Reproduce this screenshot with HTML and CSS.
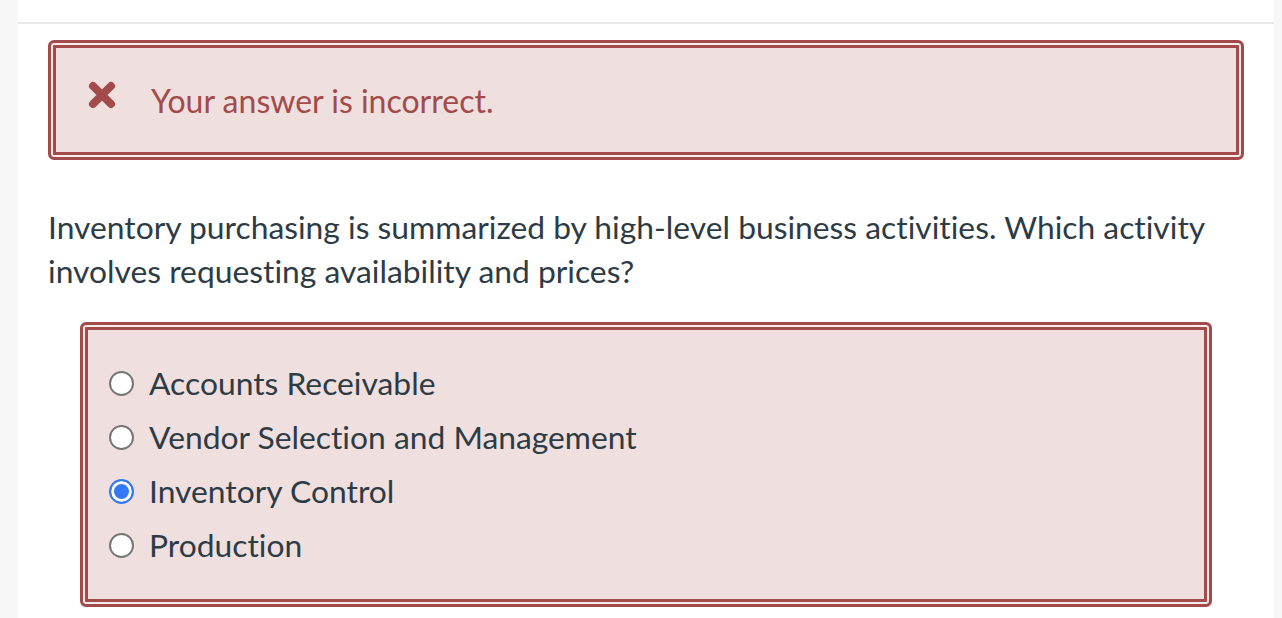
FILE: index.html
```html
<!DOCTYPE html>
<html lang="en">
<head>
<meta charset="utf-8">
<title>Quiz question</title>
<link rel="stylesheet" href="styles.css">
</head>
<body>
<div class="page">
  <main class="content">
    <div class="top-bar"></div>
    <div class="body">
      <div class="feedback">
        <svg class="feedback-icon" viewBox="0 0 28 28" width="28" height="28" aria-hidden="true">
          <path d="M5 5 L23 23 M23 5 L5 23" stroke="#a24b4a" stroke-width="8" stroke-linecap="round" fill="none"/>
        </svg>
        <span class="feedback-text">Your answer is incorrect.</span>
      </div>
      <p class="question">Inventory purchasing is summarized by high-level business activities. Which activity involves requesting availability and prices?</p>
      <div class="answers">
        <label class="answer"><span class="radio"></span><span class="answer-text">Accounts Receivable</span></label>
        <label class="answer"><span class="radio"></span><span class="answer-text">Vendor Selection and Management</span></label>
        <label class="answer"><span class="radio radio-checked"></span><span class="answer-text">Inventory Control</span></label>
        <label class="answer"><span class="radio"></span><span class="answer-text">Production</span></label>
      </div>
    </div>
  </main>
</div>
</body>
</html>
```

FILE: styles.css
```css
html, body {
  margin: 0;
  padding: 0;
}
body {
  background: #f7f7f7;
  font-family: Lato, "Noto Sans", "Liberation Sans", sans-serif;
  font-variant-ligatures: none;
  color: #2d3b45;
}
.page {
  padding: 0 8px 0 18px;
  height: 618px;
  overflow: hidden;
}
.content {
  background: #ffffff;
  min-height: 618px;
}
.top-bar {
  height: 22px;
  border-bottom: 2px solid #e8e8e8;
}
.body {
  padding: 16px 30px 40px 30px;
}
.feedback {
  height: 120px;
  box-sizing: border-box;
  border: 3px solid #a24b4a;
  border-radius: 6px;
  box-shadow: inset 0 0 0 2px #f6eaea, inset 0 0 0 5px #a24b4a;
  background: #efdfdf;
  display: flex;
  align-items: center;
  padding-left: 37px;
}
.feedback-icon {
  flex: none;
  display: block;
  margin-bottom: 10px;
}
.feedback-text {
  margin-left: 35px;
  font-size: 32px;
  color: #a24b4a;
}
.question {
  margin: 45px 0 29px 0;
  font-size: 31.8px;
  line-height: 44px;
  color: #2d3b45;
}
.answers {
  margin-left: 32px;
  margin-right: 32px;
  height: 285px;
  box-sizing: border-box;
  border: 3px solid #a24b4a;
  border-radius: 6px;
  box-shadow: inset 0 0 0 2px #f6eaea, inset 0 0 0 5px #a24b4a;
  background: #efdfdf;
  padding: 31px 0 0 26px;
  display: flex;
  flex-direction: column;
}
.answer {
  display: flex;
  align-items: center;
  height: 54px;
}
.radio {
  flex: none;
  width: 25px;
  height: 25px;
  box-sizing: border-box;
  border-radius: 50%;
  border: 2px solid #767676;
  background: #ffffff;
}
.radio-checked {
  border: 2px solid #3478f6;
  background: #3478f6;
  box-shadow: inset 0 0 0 3px #ffffff;
}
.answer-text {
  margin-left: 15px;
  font-size: 31.8px;
  color: #2d3b45;
}
```
